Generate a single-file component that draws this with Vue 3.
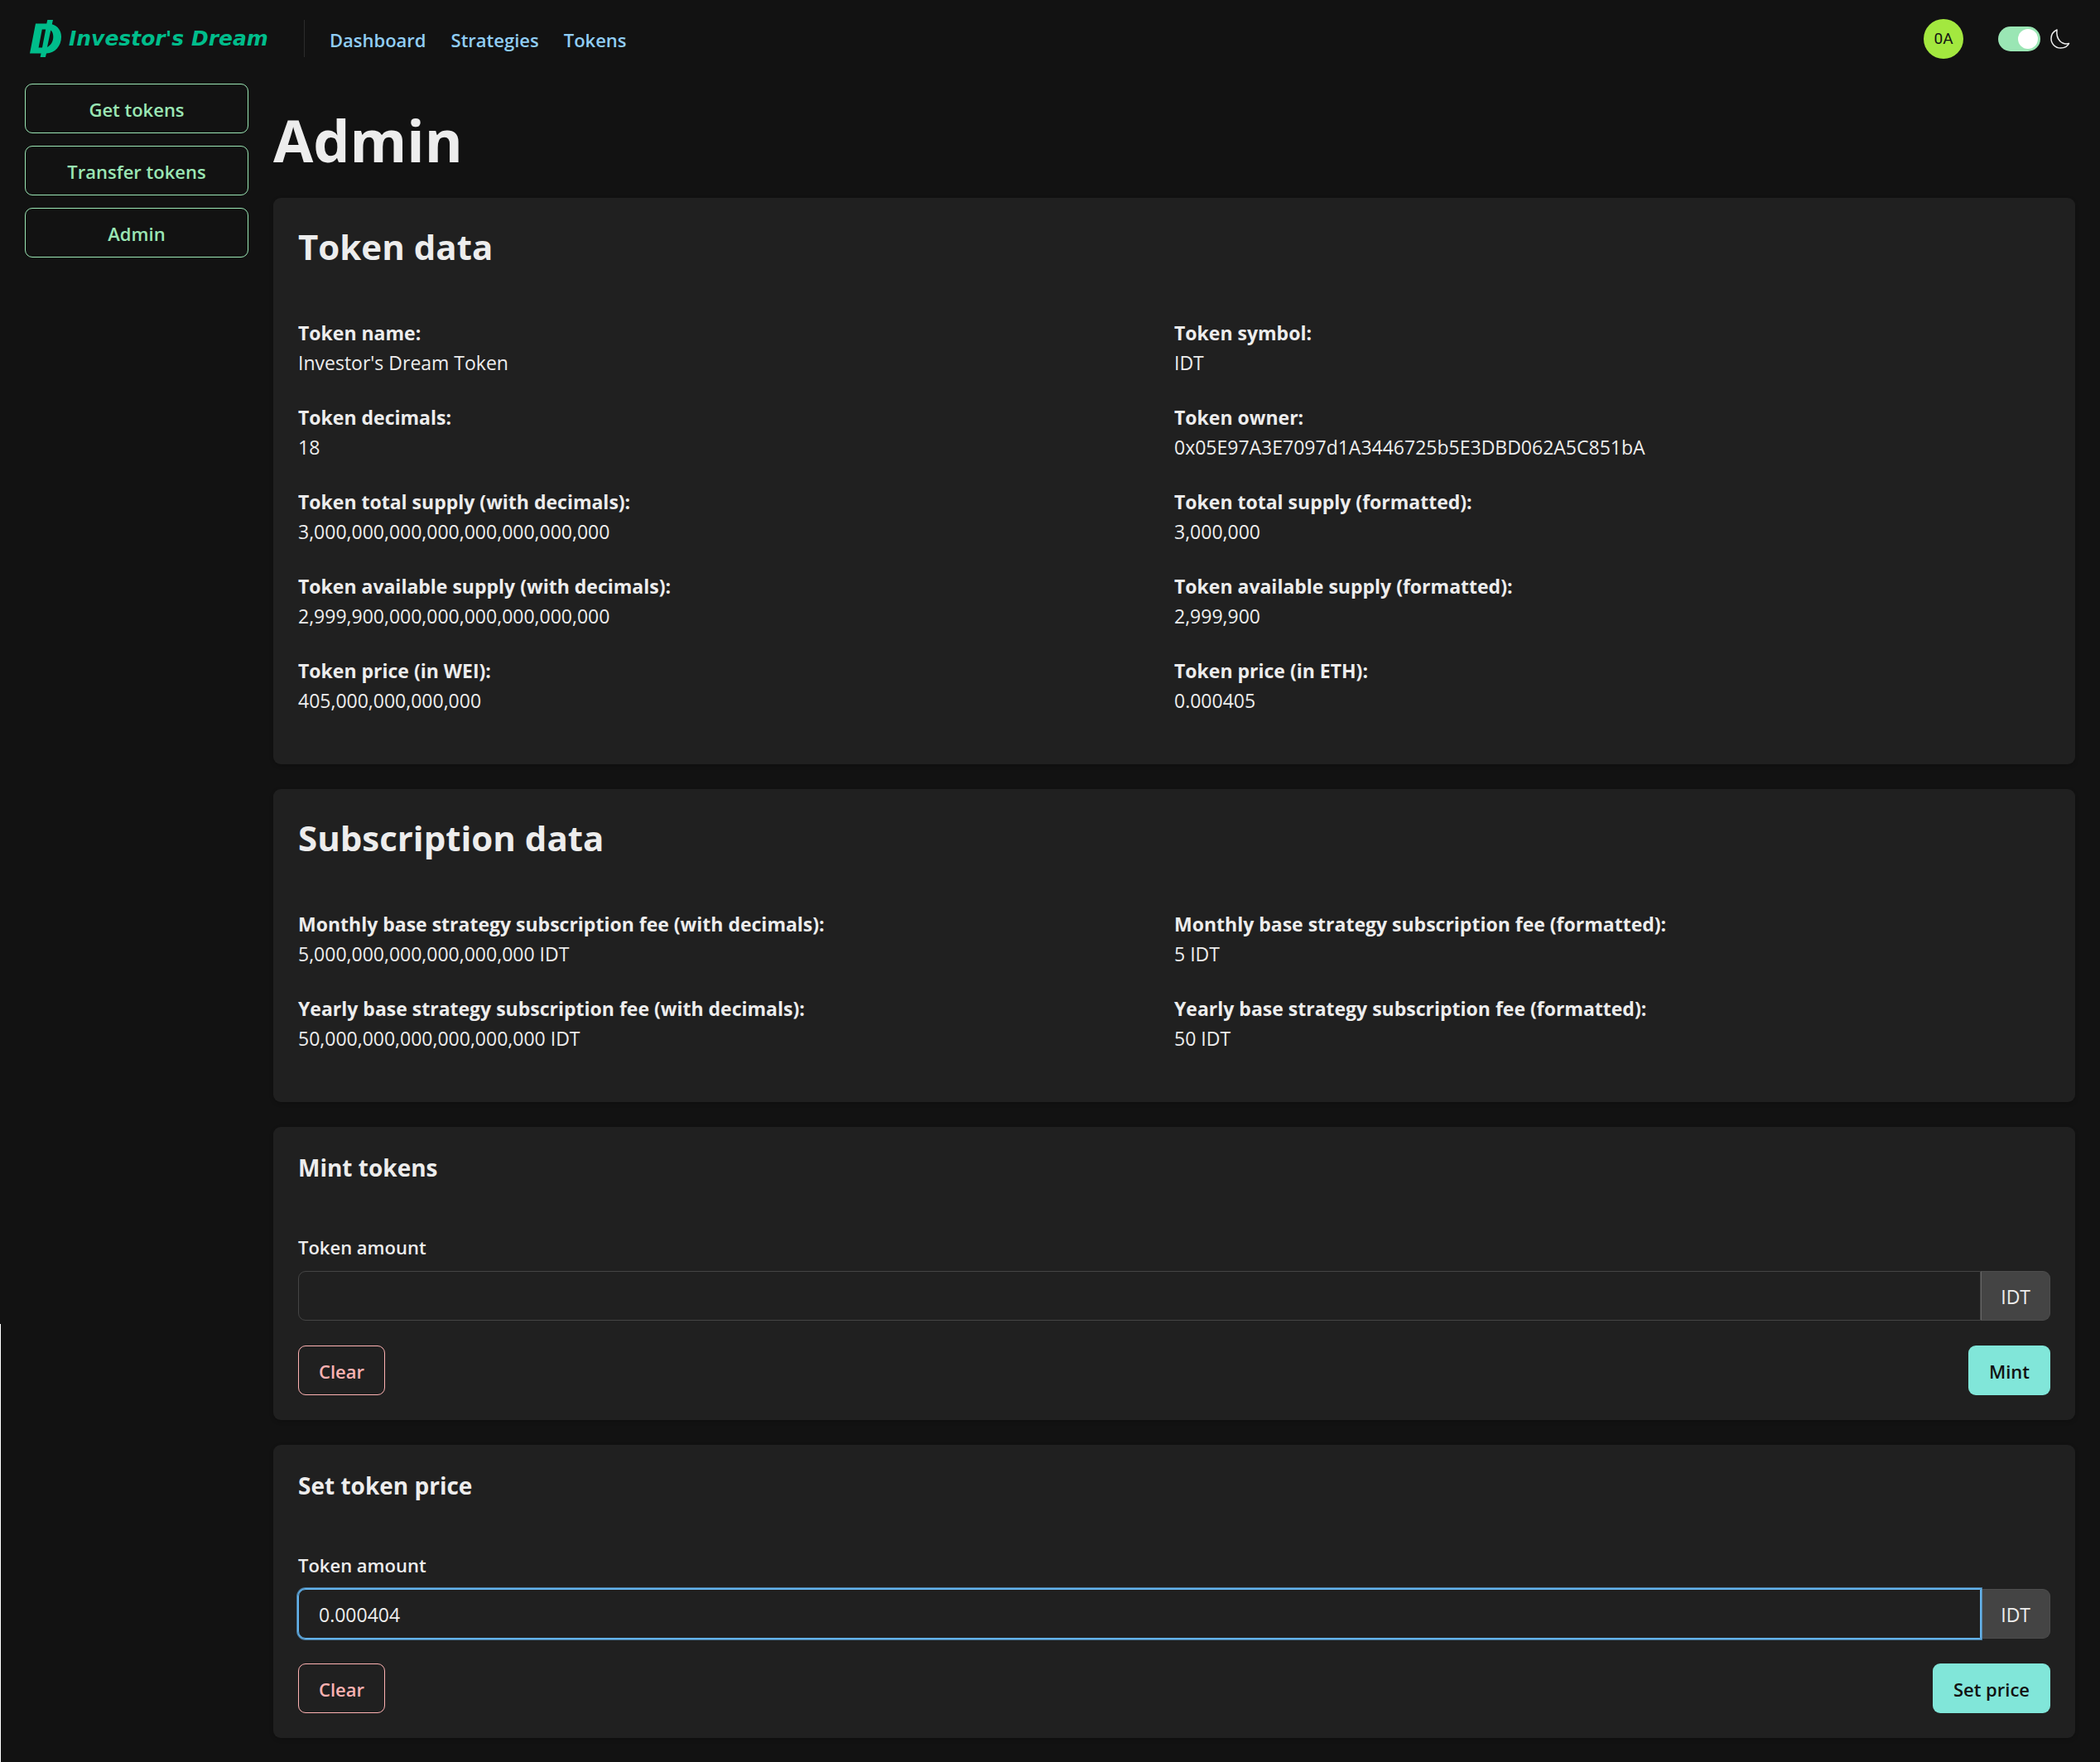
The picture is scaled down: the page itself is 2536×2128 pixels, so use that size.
<script setup>
import { ref } from 'vue'

const navLinks = ['Dashboard', 'Strategies', 'Tokens']
const sideLinks = ['Get tokens', 'Transfer tokens', 'Admin']

const dataCards = [
  {
    title: 'Token data',
    items: [
      ['Token name:', "Investor's Dream Token"],
      ['Token symbol:', 'IDT'],
      ['Token decimals:', '18'],
      ['Token owner:', '0x05E97A3E7097d1A3446725b5E3DBD062A5C851bA'],
      ['Token total supply (with decimals):', '3,000,000,000,000,000,000,000,000'],
      ['Token total supply (formatted):', '3,000,000'],
      ['Token available supply (with decimals):', '2,999,900,000,000,000,000,000,000'],
      ['Token available supply (formatted):', '2,999,900'],
      ['Token price (in WEI):', '405,000,000,000,000'],
      ['Token price (in ETH):', '0.000405'],
    ],
  },
  {
    title: 'Subscription data',
    items: [
      ['Monthly base strategy subscription fee (with decimals):', '5,000,000,000,000,000,000 IDT'],
      ['Monthly base strategy subscription fee (formatted):', '5 IDT'],
      ['Yearly base strategy subscription fee (with decimals):', '50,000,000,000,000,000,000 IDT'],
      ['Yearly base strategy subscription fee (formatted):', '50 IDT'],
    ],
  },
]

const forms = ref([
  { id: 'mint-amount', title: 'Mint tokens', action: 'Mint', value: '', active: false },
  { id: 'price-amount', title: 'Set token price', action: 'Set price', value: '0.000404', active: true },
])
const darkMode = ref(true)
</script>

<template>
  <div class="page">
    <div class="edge" aria-hidden="true"></div>
    <header class="header">
      <a class="brand" href="#">
        <svg class="brand-mark" viewBox="0 0 38 45" aria-hidden="true">
          <path
            fill-rule="evenodd"
            d="M7 4.500H20.300L21.300 0H28L26.800 5.200C34 7.400 38 13 38 20.500C38 31.500 30.500 40 20 40.600L18.900 45H12.600L13.600 40.600H0ZM14.800 11.600L10.600 33.500H15L19.200 11.600ZM25.300 12.600L21 33C25.500 30.800 28.300 26 28.300 20.600C28.300 17 27.400 14.200 25.300 12.600Z"
          />
        </svg>
        <span class="brand-name">Investor's Dream</span>
      </a>
      <nav class="nav">
        <a v-for="link in navLinks" :key="link" href="#">{{ link }}</a>
      </nav>
      <div class="tools">
        <button class="avatar" type="button">0A</button>
        <label class="theme">
          <input v-model="darkMode" class="switch" type="checkbox" role="switch" aria-label="Dark mode" />
          <svg class="moon" viewBox="0 0 24 24" aria-hidden="true">
            <path d="M8 1C3.700 3 1 6.800 1 11.500C1 18 6 23 12.500 23C17 23 20.800 21 22.500 17.500C14 19.500 6.500 13 8 1Z" />
          </svg>
        </label>
      </div>
    </header>

    <div class="body">
      <aside class="sidebar">
        <button v-for="link in sideLinks" :key="link" class="btn btn-green" type="button">{{ link }}</button>
      </aside>

      <main class="main">
        <h1>Admin</h1>

        <section v-for="card in dataCards" :key="card.title" class="card">
          <h2>{{ card.title }}</h2>
          <dl class="grid">
            <div v-for="[term, value] in card.items" :key="term" class="item">
              <dt>{{ term }}</dt>
              <dd>{{ value }}</dd>
            </div>
          </dl>
        </section>

        <section v-for="form in forms" :key="form.id" class="card">
          <h3>{{ form.title }}</h3>
          <form @submit.prevent>
            <label class="field-label" :for="form.id">Token amount</label>
            <div class="field">
              <input :id="form.id" v-model="form.value" :class="{ active: form.active }" type="text" />
              <span class="unit">IDT</span>
            </div>
            <div class="actions">
              <button class="btn btn-red" type="button" @click="form.value = ''">Clear</button>
              <button class="btn btn-teal" type="submit">{{ form.action }}</button>
            </div>
          </form>
        </section>
      </main>
    </div>
  </div>
</template>

<style>
body {
  margin: 0;
  background: #121212;
}
</style>

<style scoped>
.page {
  min-height: 100vh;
  box-sizing: border-box;
  padding: 0 30px 29px;
  background: #121212;
  color: #ededed;
  font-family: "Open Sans", "Noto Sans", sans-serif;
  font-size: 23px;
  line-height: 36px;
}

.page *,
.page *::before {
  box-sizing: border-box;
}

.edge {
  position: absolute;
  left: 0;
  bottom: 0;
  width: 1px;
  height: 529px;
  background: #fff;
}

a {
  text-decoration: none;
}

.header {
  display: flex;
  align-items: center;
  height: 93px;
  padding: 0 6px;
}

.brand {
  display: flex;
  align-items: center;
  gap: 9px;
  padding-right: 43px;
  color: #00bd8b;
}

.brand-mark {
  width: 38px;
  height: 45px;
  fill: currentColor;
}

.brand-name {
  font: italic bold 25px/36px "DejaVu Sans", sans-serif;
}

.nav {
  display: flex;
  align-items: center;
  gap: 30px;
  height: 45px;
  padding: 3px 0 0 30px;
  border-left: 1px solid #2c2c2c;
}

.nav a {
  color: #90cdf4;
  font-size: 22px;
  font-weight: 600;
}

.tools {
  display: flex;
  align-items: center;
  gap: 42px;
  margin-left: auto;
}

.avatar {
  width: 48px;
  height: 48px;
  padding: 0;
  border: 0;
  border-radius: 50%;
  background: #a3e83f;
  color: #121212;
  font: 19px/24px Roboto, sans-serif;
}

.theme {
  display: flex;
  align-items: center;
  gap: 12px;
}

.switch {
  display: flex;
  appearance: none;
  width: 51px;
  height: 30px;
  margin: 0;
  padding: 3px;
  border-radius: 15px;
  background: #4a4a4a;
}

.switch::before {
  content: "";
  width: 24px;
  height: 24px;
  border-radius: 50%;
  background: #fff;
}

.switch:checked {
  justify-content: flex-end;
  background: #9ae6b4;
}

.moon {
  width: 24px;
  height: 24px;
  fill: none;
  stroke: #ededed;
  stroke-width: 1.5;
  stroke-linejoin: round;
}

.body {
  display: flex;
  gap: 30px;
  padding-top: 8px;
}

.sidebar {
  display: flex;
  flex: 0 0 270px;
  flex-direction: column;
  gap: 15px;
}

.btn {
  height: 60px;
  padding: 1px 24px 0;
  border: 1px solid transparent;
  border-radius: 9px;
  background: transparent;
  font-family: inherit;
  font-size: 22px;
  font-weight: 600;
  line-height: 36px;
}

.btn-green {
  border-color: #9ae6b4;
  color: #9ae6b4;
}

.btn-red {
  border-color: #feb2b2;
  color: #feb2b2;
}

.btn-teal {
  background: #81e6d9;
  color: #121212;
}

.main {
  display: flex;
  flex: 1;
  flex-direction: column;
  gap: 30px;
  min-width: 0;
}

h1,
h2,
h3,
dl,
dd {
  margin: 0;
}

h1 {
  padding: 32px 0 4px;
  font-size: 70px;
  line-height: 72px;
}

h2 {
  margin-bottom: 58px;
  font-size: 42px;
  line-height: 56px;
}

h3 {
  margin-bottom: 60px;
  font-size: 28px;
  line-height: 36px;
}

.card {
  padding: 31px 30px 29px;
  border-radius: 9px;
  background: #202020;
  box-shadow: 0 2px 5px rgba(0, 0, 0, 0.2);
}

.card:has(form) {
  padding-bottom: 30px;
}

.grid {
  display: grid;
  grid-template-columns: 1fr 1fr;
}

.item {
  padding-bottom: 30px;
}

dt {
  font-weight: 700;
}

.field-label {
  display: block;
  margin-bottom: 11px;
  font-size: 22px;
  font-weight: 600;
}

.field {
  display: flex;
  height: 60px;
  margin-bottom: 30px;
}

.field input {
  flex: 1;
  min-width: 0;
  padding: 1px 24px 0;
  border: 1px solid #444;
  border-radius: 9px 0 0 9px;
  outline: 0;
  background: transparent;
  color: #ededed;
  font: inherit;
}

.field input.active {
  z-index: 1;
  border-color: #63b3ed;
  box-shadow: 0 0 0 1px #63b3ed, 0 0 0 2px rgba(99, 179, 237, 0.6);
}

.unit {
  display: flex;
  align-items: center;
  padding: 1px 23px 0;
  border: 1px solid #4d4d4d;
  border-left-color: #666;
  border-radius: 0 9px 9px 0;
  background: #444;
}

.actions {
  display: flex;
  justify-content: space-between;
}
</style>
